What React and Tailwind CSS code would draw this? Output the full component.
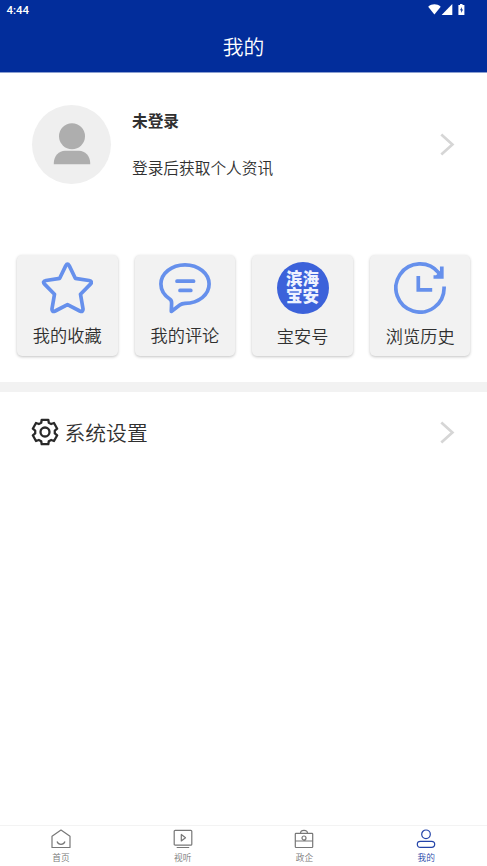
import React from "react";

function StatusBar() {
  return (
    <div className="flex h-5 items-center justify-between pl-[6.5px] pr-[21.5px] text-white">
      <span className="font-[Roboto,sans-serif] text-[11.5px] font-medium leading-5">4:44</span>
      <svg className="h-3 w-[38px]" viewBox="0 0 38 12" fill="currentColor">
        <path d="M0.2 2.7C3.9-.5 9-.5 12.7 2.7L6.4 10.6Z" />
        <path d="M24.3 0V11H13.6Z" />
        <path d="M30.4 1H32V0H34.5V1H36.4V11H30.4Z" />
        <path d="M33.8 3L32 6.3H33.2V9L35 5.6H33.8Z" fill="#022d9b" />
      </svg>
    </div>
  );
}

function Chevron() {
  return (
    <svg className="h-6 w-4 shrink-0" viewBox="0 0 16 24" fill="none" stroke="#d6d6d6" strokeWidth="2.7">
      <path d="M2.3 2.5L13.4 12.5L2.3 22.5" />
    </svg>
  );
}

function StarIcon() {
  return (
    <svg className="size-[52px]" viewBox="0 0 52 52" fill="none" stroke="#6690ec" strokeWidth="3.7" strokeLinejoin="round">
      <path d="M24.8 3.6Q26.5 .8 28.2 3.6L34.3 16.3L48 18.5Q52.2 19.4 49.2 22.4L39.5 32.2L42 46.8Q42.3 50.7 38.8 49L26.5 42.6L14.2 49Q10.7 50.7 11 46.8L13.5 32.2L3.8 22.4Q.8 19.4 5 18.5L18.7 16.3Z" />
    </svg>
  );
}

function CommentIcon() {
  return (
    <svg className="size-[52px]" viewBox="0 0 52 52" fill="none" stroke="#6690ec" strokeWidth="3.7" strokeLinejoin="round" strokeLinecap="round">
      <path d="M26 2.8C12.5 2.8 1.9 11.4 1.9 22.1C1.9 28.7 5.4 33.6 11 37.3C12.4 38.3 12.7 39.6 12.6 41.5L12.3 49.4L20.8 43.1C22.5 41.8 24 41.5 26 41.4C40 41 50.1 32.8 50.1 22.1C50.1 11.4 39.5 2.8 26 2.8Z" />
      <path d="M18 19.2H34.6M21 28.4H31.8" />
    </svg>
  );
}

function BaoanLogo() {
  return (
    <div className="flex size-[52px] items-center justify-center rounded-full bg-[#3c62da] pb-[3px]">
      <span className="w-[34px] break-all text-center text-[16.5px] font-black leading-[17px] text-[#eef2ff]">滨海宝安</span>
    </div>
  );
}

function HistoryIcon() {
  return (
    <svg className="size-[52px]" viewBox="0 0 52 52" fill="none" stroke="#6690ec" strokeWidth="3.7">
      <path d="M50.1 24.5V26A24.1 24.1 0 1 1 44.8 10.9L47 14" />
      <path d="M47.8 4.6V15H39.5" />
      <path d="M47 9.5V14.5H42L44.5 10.5Z" fill="#6690ec" strokeWidth="1" />
      <path d="M24.3 14V27.8H38.2" />
    </svg>
  );
}

function GearIcon() {
  return (
    <svg className="size-7 shrink-0" viewBox="-14 -14 28 28" fill="none" stroke="#292929" strokeWidth="2.3" strokeLinejoin="round">
      <path d="M-3.3-12.2H3.3L3.8-9.3L6.2-8L9-9L12.2-3.3L9.8-1.4V1.4L12.2 3.3L9 9L6.2 8L3.8 9.3L3.3 12.2H-3.3L-3.8 9.3L-6.2 8L-9 9L-12.2 3.3L-9.8 1.4V-1.4L-12.2-3.3L-9-9L-6.2-8L-3.8-9.3Z" />
      <circle r="4.5" />
    </svg>
  );
}

const cards = [
  { label: "我的收藏", icon: <StarIcon /> },
  { label: "我的评论", icon: <CommentIcon /> },
  { label: "宝安号", icon: <BaoanLogo />, low: true },
  { label: "浏览历史", icon: <HistoryIcon />, low: true },
];

const tabs = [
  {
    label: "首页",
    icon: <path d="M1 7.2L10 1L19 7.2V18.5H1ZM6 12.5C7.5 16.3 12.5 16.3 14 12.5" />,
  },
  {
    label: "视听",
    icon: <path d="M2.2 1.3H17.8Q18.8 1.3 18.8 2.3V15.2Q18.8 16.2 17.8 16.2H2.2Q1.2 16.2 1.2 15.2V2.3Q1.2 1.3 2.2 1.3ZM8.3 5.5V12L12.5 8.8ZM3.7 18.5H16.2" />,
  },
  {
    label: "政企",
    icon: <path d="M2 4.3H18Q18.7 4.3 18.7 5V17.8Q18.7 18.5 18 18.5H2Q1.3 18.5 1.3 17.8V5Q1.3 4.3 2 4.3ZM6.5 4.3Q6.5 1.3 10 1.3T13.5 4.3M1.3 12H18.7M12 9A2 2 0 1 1 8 9A2 2 0 1 1 12 9Z" />,
  },
  {
    label: "我的",
    active: true,
    icon: <path d="M14.3 5.3A4.3 4.3 0 1 1 5.7 5.3A4.3 4.3 0 1 1 14.3 5.3ZM4.5 12.3H15.5Q18.7 12.3 18.7 15.3T15.5 18.4H4.5Q1.3 18.4 1.3 15.3T4.5 12.3Z" />,
  },
];

export default function App() {
  return (
    <div className="flex h-[866px] w-[487px] flex-col overflow-hidden bg-white font-['Noto_Sans_CJK_SC',sans-serif] font-[350] text-[#303030]">
      <header className="h-[72px] shrink-0 border-b border-[#022d9b] bg-[#022d9b] shadow-[0_1px_0_#8b9fd0]">
        <StatusBar />
        <h1 className="pt-[11px] text-center text-[20.8px] font-[350] leading-[30px] text-white">我的</h1>
      </header>

      <section className="flex h-[144px] shrink-0 items-center pl-8 pr-8">
        <div className="flex size-[79px] shrink-0 items-center justify-center rounded-full bg-[#efefef]">
          <svg className="h-[42px] w-[38px]" viewBox="0 0 38 42" fill="#aeaeae">
            <circle cx="19" cy="13.2" r="13" />
            <path d="M.8 41.3V40C.8 33 6 27.7 12 27.7H26C32 27.7 37.2 33 37.2 40V41.3Z" />
          </svg>
        </div>
        <div className="ml-[21px] flex flex-1 flex-col gap-[23px] pt-px text-[15.7px] leading-6">
          <span className="font-bold">未登录</span>
          <span>登录后获取个人资讯</span>
        </div>
        <Chevron />
      </section>

      <section className="mt-[38.5px] flex h-[101px] shrink-0 justify-between pl-[17px] pr-[16.5px]">
        {cards.map((card) => (
          <div
            key={card.label}
            className="flex w-[100.5px] flex-col items-center rounded-[5px] bg-[#f2f2f2] pt-[7.5px] shadow-[0_1px_3px_rgba(0,0,0,0.24)]"
          >
            {card.icon}
            <span className={card.low ? "mt-[10px] text-[17.2px] leading-6" : "mt-[9px] text-[17.2px] leading-6"}>
              {card.label}
            </span>
          </div>
        ))}
      </section>

      <div className="mt-[26.5px] h-[10px] shrink-0 bg-[#f2f2f2]" />

      <section className="flex h-[80px] shrink-0 items-center pl-[31px] pr-8">
        <GearIcon />
        <span className="ml-[5.5px] flex-1 text-[20.8px] leading-[30px]">系统设置</span>
        <Chevron />
      </section>

      <nav className="mt-auto grid h-[41px] shrink-0 grid-cols-4 border-t border-[#f3f3f3]">
        {tabs.map((tab) => (
          <div
            key={tab.label}
            className={
              tab.active
                ? "flex flex-col items-center pt-[3px] text-[#2343a8]"
                : "flex flex-col items-center pt-[3px] text-[#777777]"
            }
          >
            <svg className="size-5" viewBox="0 0 20 20" fill="none" stroke="currentColor" strokeWidth="1.2" strokeLinejoin="round">
              {tab.icon}
            </svg>
            <span className="mt-[2.5px] text-[8.7px] leading-3">{tab.label}</span>
          </div>
        ))}
      </nav>
    </div>
  );
}
